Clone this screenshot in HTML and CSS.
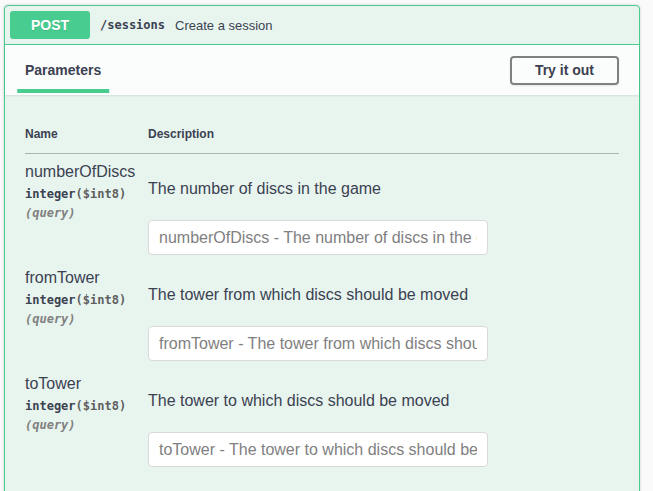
FILE: index.html
```html
<!DOCTYPE html>
<html>
<head>
<meta charset="utf-8">
<link rel="stylesheet" href="styles.css">
</head>
<body>
<div class="opblock">
  <div class="summary">
    <span class="method">POST</span>
    <span class="path">/sessions</span>
    <span class="summary-desc">Create a session</span>
  </div>
  <div class="section-header">
    <div class="tab"><h4><span>Parameters</span></h4></div>
    <button class="btn">Try it out</button>
  </div>
  <div class="params-wrap">
    <table class="params">
      <thead>
        <tr><th class="col-name">Name</th><th class="col-desc">Description</th></tr>
      </thead>
      <tbody>
        <tr>
          <td class="col-name">
            <div class="p-name">numberOfDiscs</div>
            <div class="p-type">integer<span class="p-format">($int8)</span></div>
            <div class="p-in">(query)</div>
          </td>
          <td class="col-desc">
            <p class="p-desc">The number of discs in the game</p>
            <input class="p-input" type="text" placeholder="numberOfDiscs - The number of discs in the game">
          </td>
        </tr>
        <tr>
          <td class="col-name">
            <div class="p-name">fromTower</div>
            <div class="p-type">integer<span class="p-format">($int8)</span></div>
            <div class="p-in">(query)</div>
          </td>
          <td class="col-desc">
            <p class="p-desc">The tower from which discs should be moved</p>
            <input class="p-input" type="text" placeholder="fromTower - The tower from which discs should be moved">
          </td>
        </tr>
        <tr>
          <td class="col-name">
            <div class="p-name">toTower</div>
            <div class="p-type">integer<span class="p-format">($int8)</span></div>
            <div class="p-in">(query)</div>
          </td>
          <td class="col-desc">
            <p class="p-desc">The tower to which discs should be moved</p>
            <input class="p-input" type="text" placeholder="toTower - The tower to which discs should be moved">
          </td>
        </tr>
      </tbody>
    </table>
  </div>
</div>
</body>
</html>
```

FILE: styles.css
```css
html {
  overflow: hidden;
}

body {
  margin: 0;
  padding: 5px 13px 0 4px;
  background: #fafafa;
  font-family: "Liberation Sans", Arial, sans-serif;
  color: #3b4151;
}

.opblock {
  border: 1px solid #49cc90;
  border-radius: 4px;
  background: #e8f5ef;
  box-shadow: 0 0 3px rgba(0, 0, 0, 0.19);
  min-height: 520px;
}

.summary {
  display: flex;
  align-items: center;
  padding: 5px;
  border-bottom: 1px solid #49cc90;
}

.method {
  display: inline-block;
  min-width: 80px;
  padding: 6px 0;
  line-height: 16px;
  text-align: center;
  background: #49cc90;
  color: #fff;
  font-size: 14px;
  font-weight: 700;
  border-radius: 3px;
  text-shadow: 0 1px 0 rgba(0, 0, 0, 0.1);
}

.path {
  padding: 0 10px;
  font-family: "DejaVu Sans Mono", monospace;
  font-weight: 700;
  font-size: 12px;
  color: #3b4151;
}

.summary-desc {
  font-size: 13px;
  color: #3b4151;
}

.section-header {
  display: flex;
  align-items: center;
  justify-content: space-between;
  min-height: 50px;
  box-sizing: border-box;
  padding: 8px 20px;
  background: rgba(255, 255, 255, 0.8);
  box-shadow: 0 1px 2px rgba(0, 0, 0, 0.1);
}

.tab h4 {
  margin: 0;
  font-size: 14px;
  line-height: 16px;
  font-weight: 700;
  color: #3b4151;
}

.tab h4 span {
  position: relative;
  display: inline-block;
}

.tab h4 span::after {
  content: "";
  position: absolute;
  left: 50%;
  bottom: -15px;
  width: 120%;
  height: 4px;
  transform: translateX(-50%);
  background: #49cc90;
}

.btn {
  font-family: "Liberation Sans", Arial, sans-serif;
  font-size: 14px;
  font-weight: 700;
  line-height: 15px;
  padding: 5px 23px;
  color: #3b4151;
  background: transparent;
  border: 2px solid #808080;
  border-radius: 4px;
  box-shadow: 0 1px 2px rgba(0, 0, 0, 0.1);
}

.params-wrap {
  padding: 20px 20px 0;
}

.params {
  width: 100%;
  border-collapse: collapse;
}

.params th {
  text-align: left;
  font-size: 12px;
  font-weight: 700;
  line-height: 14px;
  padding: 12px 0;
  border-bottom: 1px solid rgba(59, 65, 81, 0.2);
  color: #3b4151;
}

.params th.col-name {
  width: 123px;
}

.params td {
  vertical-align: top;
  padding: 9px 0 5px;
}

.p-name {
  font-size: 16px;
  line-height: 18px;
}

.p-type {
  padding: 5px 0 3px;
  font-family: "DejaVu Sans Mono", monospace;
  font-size: 12px;
  line-height: 16px;
  font-weight: 700;
  color: #3b4151;
}

.p-format {
  color: #606060;
}

.p-in {
  font-family: "DejaVu Sans Mono", monospace;
  font-size: 12px;
  line-height: 16px;
  font-style: italic;
  font-weight: 700;
  color: #808080;
}

.p-desc {
  margin: 16px 0 0;
  font-size: 16px;
  line-height: 20px;
}

.p-input {
  display: block;
  margin-top: 21px;
  width: 340px;
  height: 35px;
  box-sizing: border-box;
  padding: 8px 10px;
  font-family: "Liberation Sans", Arial, sans-serif;
  font-size: 16px;
  color: #3b4151;
  background: #fff;
  border: 1px solid #d9d9d9;
  border-radius: 4px;
  outline: none;
}

.p-input::placeholder {
  color: #808080;
  opacity: 1;
}
```
